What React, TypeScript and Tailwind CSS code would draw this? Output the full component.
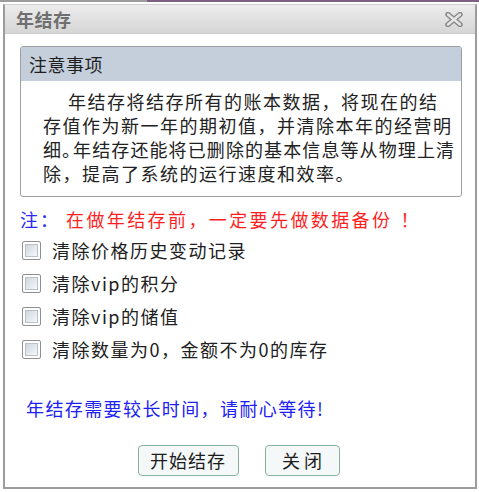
const cjk = { fontFamily: '"Noto Sans CJK SC", "Noto Sans", sans-serif' };

const options = [
  '清除价格历史变动记录',
  '清除vip的积分',
  '清除vip的储值',
  '清除数量为0，金额不为0的库存',
];

function CloseIcon() {
  return (
    <svg width="18" height="15" viewBox="0 0 18 15">
      <path d="M3 2.5 L15 12.5 M15 2.5 L3 12.5" stroke="#8a8a8a" strokeWidth="5.5" strokeLinecap="round" />
      <path d="M3 2.5 L15 12.5 M15 2.5 L3 12.5" stroke="#e6e6e6" strokeWidth="2.4" strokeLinecap="round" />
    </svg>
  );
}

function CheckBox() {
  return (
    <span className="flex h-[19px] w-[19px] items-center justify-center rounded-[2px] border border-[#8e8f8f] bg-white">
      <span className="h-[13px] w-[13px] border border-[#b8c0ca] bg-gradient-to-br from-[#cfd6df] to-[#f7f9fb]" />
    </span>
  );
}

export default function App() {
  return (
    <div className="relative h-[492px] w-[479px] bg-white" style={cjk}>
      <div className="flex h-[2px]">
        <div className="w-[147px] bg-[#9c9c9c]" />
        <div className="flex-1 bg-[#7d5f80]" />
      </div>
      <div className="ml-[3px] mt-[2px] flex h-[485px] w-[474px] flex-col border-x-2 border-b-2 border-t border-x-[#9c9c9c] border-b-[#9c9c9c] border-t-[#cfcfcf]">
        <div className="flex h-[29px] shrink-0 items-center justify-between border-b border-[#c9c9c9] bg-gradient-to-b from-[#ececec] to-[#d6d6d6] pl-[11px] pr-[12px]">
          <span className="text-[18px] font-bold leading-none tracking-[0.5px] text-[#6f6f6f]">年结存</span>
          <CloseIcon />
        </div>

        <div className="mx-[15px] mt-[12px] h-[151px] w-[442px] shrink-0 overflow-hidden rounded-[3px] border border-[#9f9f9f]">
          <div className="flex h-[34px] items-center bg-[#c4cfdb] pl-[8px] text-[18px] tracking-[0.5px] text-[#1f1f1f]">注意事项</div>
          <div className="whitespace-nowrap pl-[22px] pt-[8px] text-[18px] leading-[24px] tracking-[1.5px] text-[#222]">
            <div className="pl-[25px]">年结存将结存所有的账本数据，将现在的结</div>
            <div>存值作为新一年的期初值，并清除本年的经营明</div>
            <div className="tracking-[1.1px]">
              细<span className="tracking-[-9px]">。</span>
              <span className="ml-[2px]">年结存还能将已删除的基本信息等从物理上清</span>
            </div>
            <div>除，提高了系统的运行速度和效率。</div>
          </div>
        </div>

        <div className="ml-[15px] mt-[10px] flex shrink-0 items-center text-[18px] leading-[24px] tracking-[2px]">
          <span className="text-[#2a2aff]">注：</span>
          <span className="ml-[6px] tracking-[2.4px] text-[#ff1f1f]">
            在做年结存前，一定要先做数据备份<span className="ml-[8px]">！</span>
          </span>
        </div>

        <div className="ml-[17px] mt-[7px] flex shrink-0 flex-col gap-[9px]">
          {options.map(o => (
            <div key={o} className="flex h-[24px] items-center gap-[11px] text-[18px] tracking-[1.5px] text-[#202020]">
              <CheckBox />
              <span>{o}</span>
            </div>
          ))}
        </div>

        <div className="ml-[21px] mt-[35px] shrink-0 text-[18px] leading-[24px] tracking-[1.4px] text-[#2020f5]">
          年结存需要较长时间，请耐心等待!
        </div>

        <div className="mt-[25px] flex shrink-0 justify-center gap-[26px] pr-[3px]">
          <button className="h-[31px] w-[101px] rounded-[4px] border border-[#89b29c] bg-[#f5f8f8] text-[18px] tracking-[1px] text-[#1c1c1c]">
            开始结存
          </button>
          <button className="h-[31px] w-[75px] rounded-[4px] border border-[#89b29c] bg-[#f5f8f8] text-[18px] text-[#1c1c1c]">
            关 闭
          </button>
        </div>
      </div>
    </div>
  );
}
